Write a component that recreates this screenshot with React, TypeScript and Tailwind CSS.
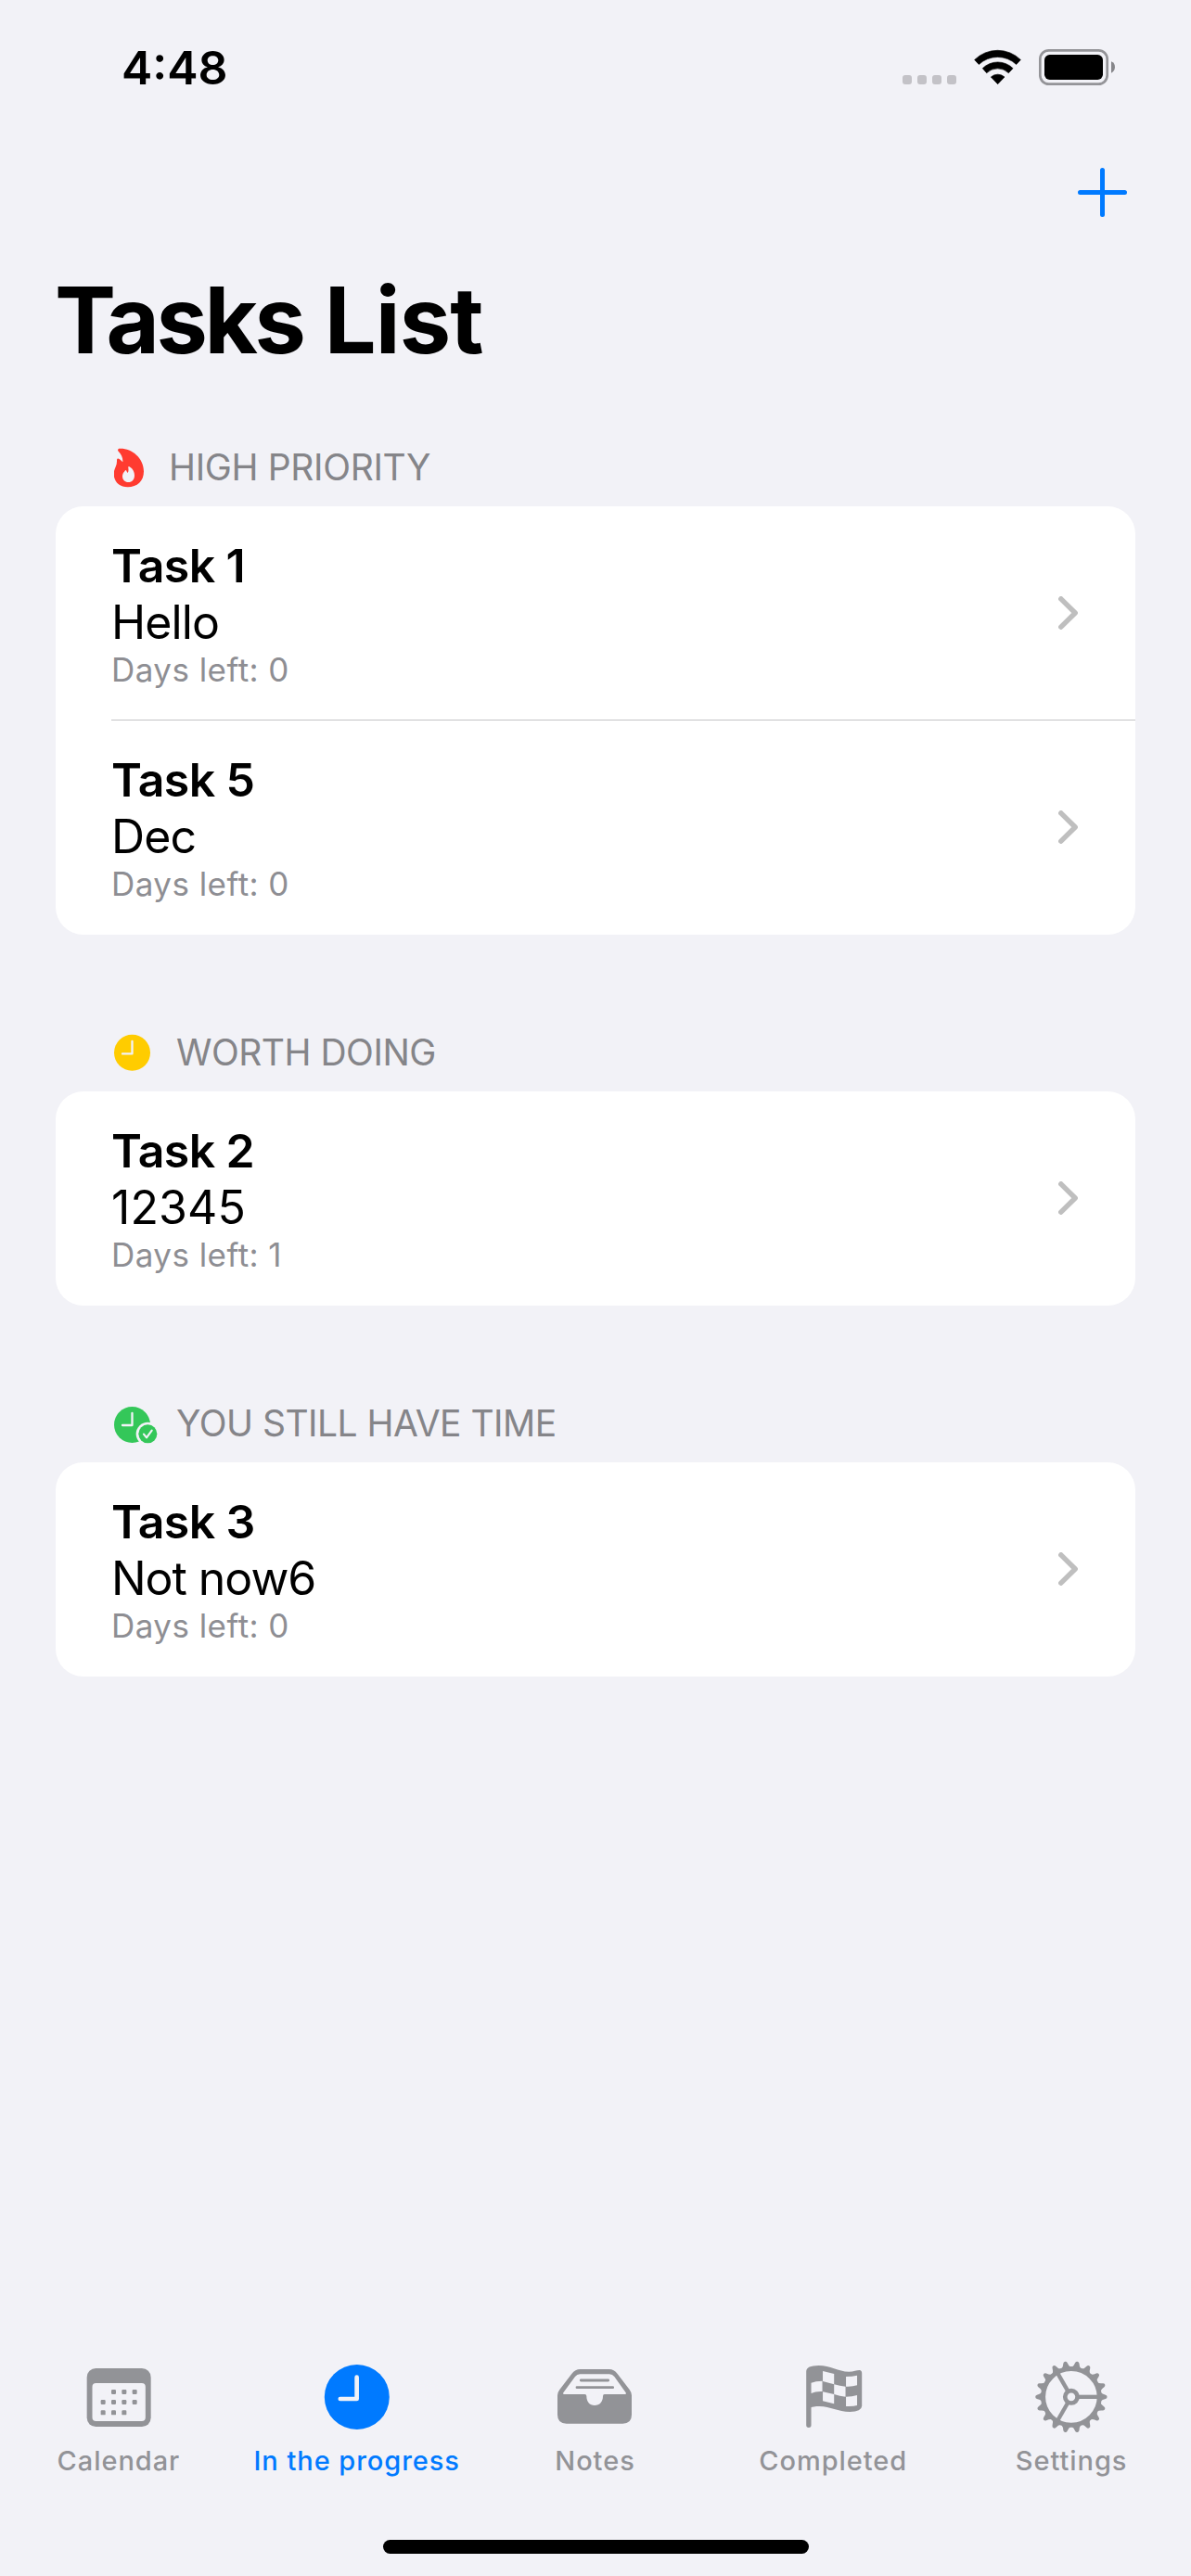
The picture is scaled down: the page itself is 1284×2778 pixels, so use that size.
import React from "react";

type Task = { title: string; note: string; noteSpacing: string; days: number };
type Section = {
  label: string;
  icon: React.ReactNode;
  spacing: string;
  tasks: Task[];
};

function FlameIcon() {
  return (
    <svg className="h-[47px] w-[59px] shrink-0" viewBox="249 600 177 141" fill="#ff3b30">
      <path
        fillRule="evenodd"
        d="M267 611C304 609 345 640 345 685C345 717 324 736 293 736C266 736 248 718 248 693C248 676 259 668 258 649C258 643 262 642 266 645C271 649 274 652 277 655C278 640 272 629 263 620C259 615 262 611 267 611ZM295 720C307 720 315 711 315 698C315 686 308 674 297 669C294 669 295 671 295 674C296 680 296 686 293 690C291 688 290 686 289 683C288 680 286 680 284 683C280 688 276 693 276 701C276 711 284 720 295 720Z"
      />
    </svg>
  );
}

function YellowClockIcon() {
  return (
    <svg className="h-[47px] w-[67px] shrink-0" viewBox="99 33 201 141" fill="none">
      <circle cx="157.5" cy="106" r="58.5" fill="#ffcc00" />
      <path d="M157.500 69V109H126" stroke="#f2f2f7" strokeWidth="7" strokeLinecap="round" strokeLinejoin="round" />
    </svg>
  );
}

function ClockCheckIcon() {
  return (
    <svg className="h-[47px] w-[67px] shrink-0" viewBox="99 33 201 141" fill="none">
      <circle cx="157.500" cy="109.500" r="58.500" fill="#34c759" />
      <path d="M157.500 72V111H126" stroke="#f2f2f7" strokeWidth="7" strokeLinecap="round" strokeLinejoin="round" />
      <circle cx="208" cy="139" r="38" fill="#f2f2f7" />
      <circle cx="208" cy="139" r="30" fill="#34c759" />
      <path d="M195 140L204 151L221 128" stroke="#f2f2f7" strokeWidth="6.500" strokeLinecap="round" strokeLinejoin="round" />
    </svg>
  );
}

function Chevron() {
  return (
    <svg className="h-[36px] w-[21px] shrink-0" viewBox="123 9 63 108" fill="none">
      <path d="M131.500 17.500L177.500 63L131.500 108.500" stroke="#bfbfbf" strokeWidth="16.500" strokeLinecap="round" strokeLinejoin="round" />
    </svg>
  );
}

function WifiIcon() {
  return (
    <svg className="h-[39px] w-[51px]" viewBox="300 69 153 117">
      <g fill="#000" stroke="#000" strokeWidth="2" strokeLinejoin="round">
        <path d="M302 103A106 106 0 0 1 451 103L437 118A88 88 0 0 0 316 118Z" transform="translate(0 0.500)" />
        <path d="M328 131A70 70 0 0 1 426 131L412 146A51 51 0 0 0 341 146Z" />
        <path d="M355 159A33 33 0 0 1 399 159L377 182Z" />
      </g>
    </svg>
  );
}

function BatteryIcon() {
  return (
    <svg className="h-[39px] w-[82px]" viewBox="510 69 246 117">
      <rect x="514" y="73" width="217" height="109" rx="28" fill="none" stroke="#949498" strokeWidth="8" />
      <rect x="528" y="87" width="189" height="81" rx="17" fill="#000" />
      <path d="M744 109C752 112 756 119 756 127C756 136 752 142 744 146Z" fill="#86868a" />
    </svg>
  );
}

function CalendarIcon() {
  const dots: [number, number][] = [
    [241, 141], [275, 141], [309, 141],
    [207, 174], [241, 174], [275, 174], [309, 174],
    [207, 208], [241, 208], [275, 208],
  ];
  return (
    <svg className="h-[78px] w-[84px]" viewBox="139 48 252 234" fill="currentColor">
      <rect x="162" y="72" width="207" height="189" rx="29" />
      <rect x="179.500" y="120" width="172" height="123" rx="12" fill="#f2f2f7" />
      {dots.map(([x, y]) => (
        <rect key={`${x}-${y}`} x={x} y={y} width="15" height="15" rx="3.500" />
      ))}
    </svg>
  );
}

function ClockIcon() {
  return (
    <svg className="h-[78px] w-[84px]" viewBox="909.600 48 252 234" fill="none">
      <circle cx="1035" cy="165" r="105" fill="currentColor" />
      <path d="M1034.500 101V171H981" stroke="#f2f2f7" strokeWidth="14" strokeLinecap="round" strokeLinejoin="round" />
    </svg>
  );
}

function TrayIcon() {
  return (
    <svg className="h-[78px] w-[84px]" viewBox="120 48 252 234" fill="currentColor">
      <path
        fillRule="evenodd"
        d="M123 160Q123 150 130 141L169 90Q180 75 197 75H290Q306 75 317 90L356 141Q363 150 363 160V222Q363 251 334 251H152Q123 251 123 222ZM142 151Q139 156 145 156H211Q217 156 217 162C217 180 227 192 243 192C260 192 270 180 270 162Q270 156 275 156H341Q347 156 344 151L307 99Q301 91 291 91H196Q186 91 180 99Z"
      />
      <path d="M199 111H287M186 134H302" stroke="currentColor" strokeWidth="8.500" strokeLinecap="round" />
    </svg>
  );
}

function FlagIcon() {
  return (
    <svg className="h-[78px] w-[84px]" viewBox="890.400 48 252 234" fill="currentColor">
      <path d="M927 82Q928 63 967 63C1005 63 1030 83 1065 83C1081 83 1090 78 1099 78Q1107 79 1107 88V194Q1106 212 1068 213C1030 213 1005 195 970 195C955 195 946 197 943 199V256A8 8 0 0 1 927 256Z" />
      <g fill="#f2f2f7">
        <path d="M943 119Q957 113 979 113V147Q957 146 943 153Z" />
        <path d="M980.500 81L1017 90V124L980.500 114Z" />
        <path d="M980.500 148L1017 156V187L980.500 178Z" />
        <path d="M1017 124Q1036 130 1054 131V164Q1036 162 1017 156Z" />
        <path d="M1055.500 99Q1076 99 1091.500 95V127Q1076 132 1055.500 131Z" />
        <path d="M1055.500 164Q1076 164 1091.500 159V192Q1080 196 1055.500 195Z" />
      </g>
    </svg>
  );
}

function GearIcon() {
  const teeth = Array.from({ length: 18 }, (_, i) => i * 20);
  return (
    <svg className="h-[78px] w-[84px]" viewBox="100.800 48 252 234" fill="none">
      <g transform="translate(223.500 164.500)" stroke="currentColor">
        <circle r="91" strokeWidth="15" />
        <circle r="20" strokeWidth="14" />
        {[0, 120, 240].map((a) => (
          <path key={a} d="M24 0H88" strokeWidth="13" transform={`rotate(${a})`} />
        ))}
        {teeth.map((a) => (
          <path
            key={a}
            d="M95 -15Q100 -9 111 -6.500Q116 -5 116 0Q116 5 111 6.500Q100 9 95 15Z"
            fill="currentColor"
            stroke="none"
            transform={`rotate(${a})`}
          />
        ))}
      </g>
    </svg>
  );
}

const sections: Section[] = [
  {
    label: "HIGH PRIORITY",
    icon: <FlameIcon />,
    spacing: "tracking-[-0.35px]",
    tasks: [
      { title: "Task 1", note: "Hello", noteSpacing: "tracking-[-0.9px]", days: 0 },
      { title: "Task 5", note: "Dec", noteSpacing: "tracking-[-0.9px]", days: 0 },
    ],
  },
  {
    label: "WORTH DOING",
    icon: <YellowClockIcon />,
    spacing: "tracking-[-0.5px]",
    tasks: [{ title: "Task 2", note: "12345", noteSpacing: "tracking-[0.1px]", days: 1 }],
  },
  {
    label: "YOU STILL HAVE TIME",
    icon: <ClockCheckIcon />,
    spacing: "tracking-[-0.52px]",
    tasks: [{ title: "Task 3", note: "Not now6", noteSpacing: "tracking-[-1.05px]", days: 0 }],
  },
];

const tabs = [
  { label: "Calendar", icon: <CalendarIcon />, active: false },
  { label: "In the progress", icon: <ClockIcon />, active: true },
  { label: "Notes", icon: <TrayIcon />, active: false },
  { label: "Completed", icon: <FlagIcon />, active: false },
  { label: "Settings", icon: <GearIcon />, active: false },
];

function TaskRow({ task, divided }: { task: Task; divided: boolean }) {
  return (
    <li
      className={`ml-[60px] flex h-[231px] items-center justify-between border-b pr-[62px] ${
        divided ? "border-[#c4c4c6]" : "border-transparent"
      }`}
    >
      <div className="h-full pt-[34px]">
        <h3 className="text-[50px] leading-[60px] font-semibold tracking-[-0.6px]">{task.title}</h3>
        <p className={`text-[50px] leading-[62px] ${task.noteSpacing}`}>{task.note}</p>
        <p className="text-[35px] leading-[40px] tracking-[0.45px] text-[#8e8e93]">Days left: {task.days}</p>
      </div>
      <Chevron />
    </li>
  );
}

export default function App() {
  return (
    <div className="flex h-[2778px] w-[1284px] flex-col overflow-hidden bg-[#f2f2f7] font-['Inter',sans-serif] text-black">
      <header className="flex h-[132px] items-start justify-between pr-[82px] pl-[131px]">
        <time className="mt-[43px] text-[50px] leading-[60px] font-semibold">4:48</time>
        <div className="mt-[53px] flex items-end">
          <div className="mr-[19px] mb-px flex gap-[6px]">
            {[0, 1, 2, 3].map((i) => (
              <span key={i} className="size-[10px] rounded-[3px] bg-[#c3c2c7]" />
            ))}
          </div>
          <WifiIcon />
          <div className="w-[19px]" />
          <BatteryIcon />
        </div>
      </header>

      <nav className="flex h-[153px] items-start justify-end pt-[49px] pr-[69px]">
        <button aria-label="Add task">
          <svg className="size-[53px]" viewBox="0 0 53 53" fill="none">
            <path d="M26.500 2.500V50.500M2.500 26.500H50.500" stroke="#007aff" strokeWidth="5" strokeLinecap="round" />
          </svg>
        </button>
      </nav>

      <h1 className="pl-[59px] text-[99px] leading-[120px] font-bold">
        <span className="tracking-[-3.4px]">Tasks </span>
        <span className="ml-[3px] tracking-[-0.9px]">List</span>
      </h1>

      <main className="flex flex-1 flex-col gap-[103px] px-[60px] pt-[75px]">
        {sections.map((s) => (
          <section key={s.label}>
            <h2 className="mb-[19px] flex pl-[63px] text-[39px] leading-[47px] text-[#858589]">
              {s.icon}
              <span className={s.spacing}>{s.label}</span>
            </h2>
            <ul className="overflow-hidden rounded-[30px] bg-white">
              {s.tasks.map((t, i) => (
                <TaskRow key={t.title} task={t} divided={i < s.tasks.length - 1} />
              ))}
            </ul>
          </section>
        ))}
      </main>

      <footer className="flex h-[232px] flex-col items-center justify-between pb-[24px]">
        <div className="grid w-full grid-cols-5">
          {tabs.map((t) => (
            <button
              key={t.label}
              className={`flex flex-col items-center gap-[12px] ${t.active ? "text-[#007aff]" : "text-[#929397]"}`}
            >
              {t.icon}
              <span className="mr-px text-[29px] leading-[35px] font-medium tracking-[0.95px] whitespace-nowrap">
                {t.label}
              </span>
            </button>
          ))}
        </div>
        <div className="ml-px h-[15px] w-[459px] rounded-full bg-black" />
      </footer>
    </div>
  );
}
